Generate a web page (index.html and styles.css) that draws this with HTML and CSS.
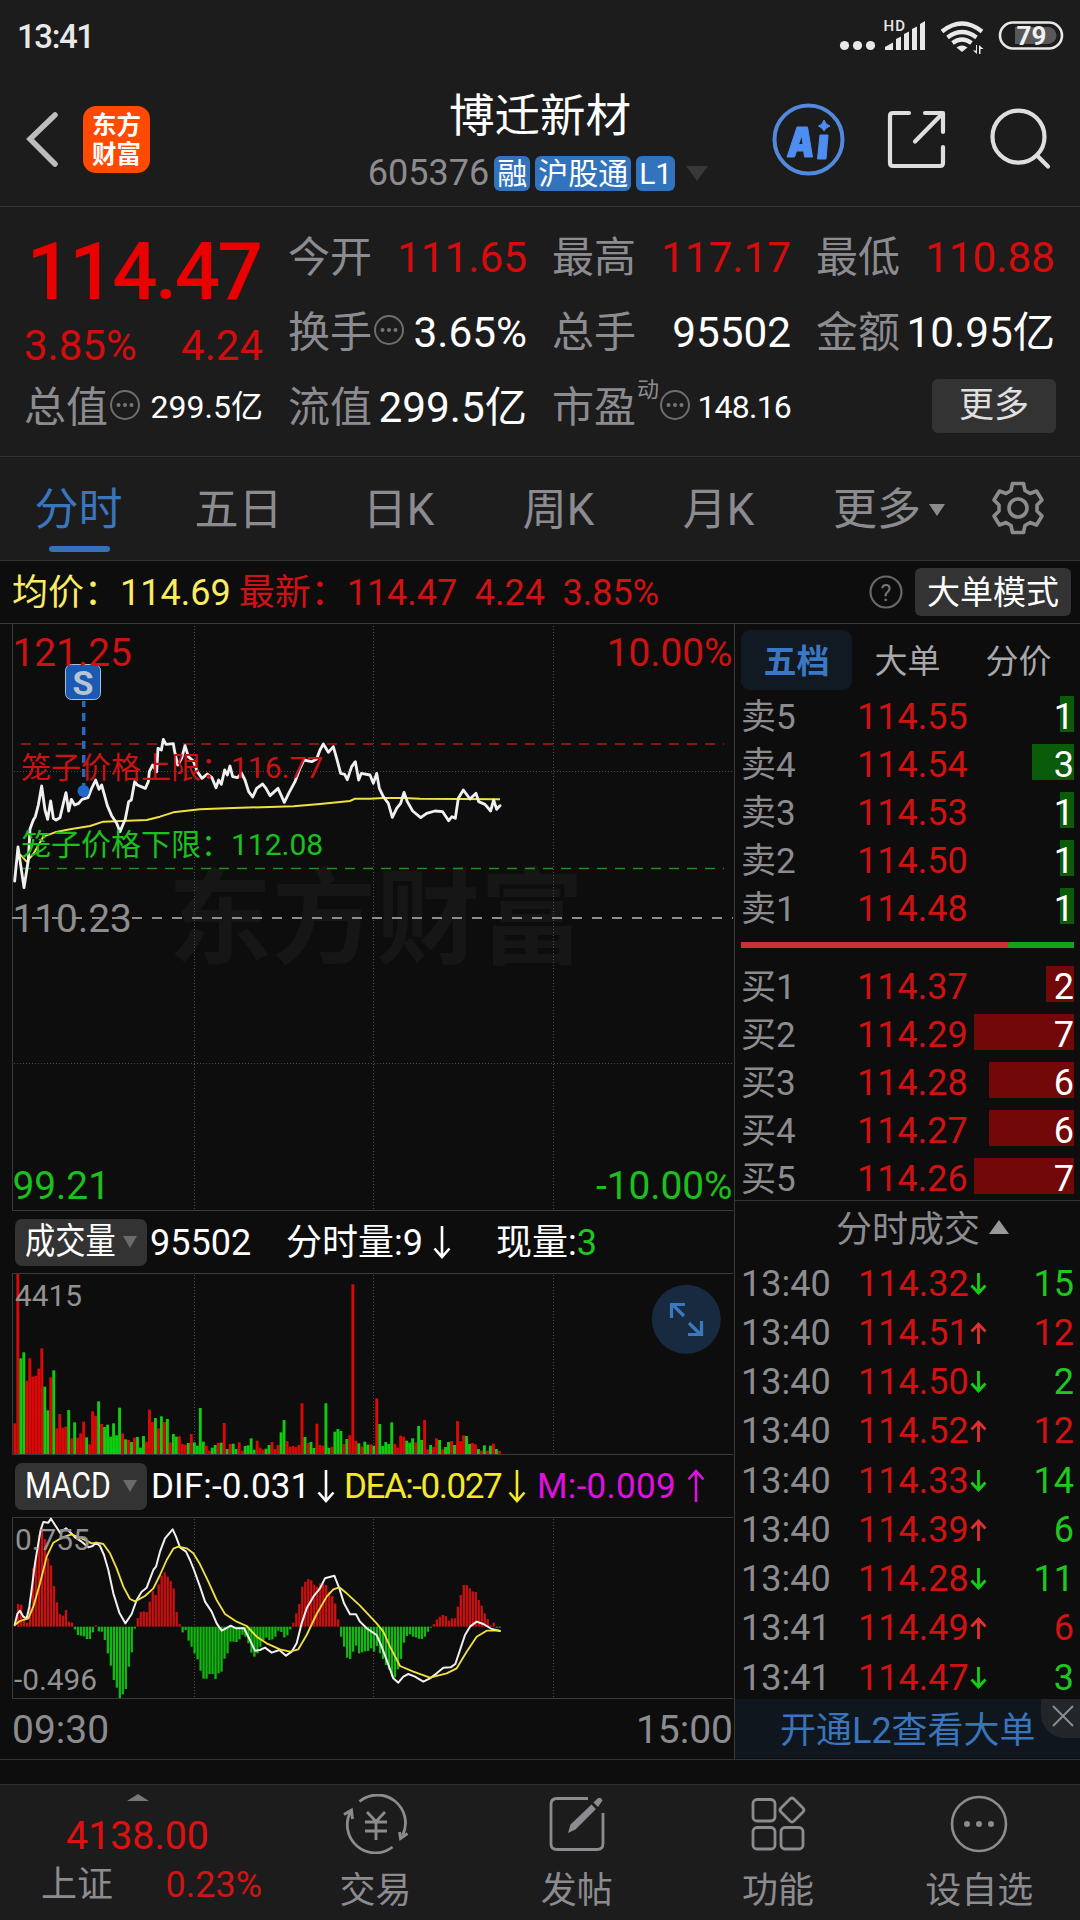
FILE: index.html
```html
<!DOCTYPE html>
<html lang="zh-CN">
<head>
<meta charset="utf-8">
<title>博迁新材 605376</title>
<link rel="stylesheet" href="styles.css">
</head>
<body>
<svg class="defs" width="0" height="0">
  <symbol id="more" viewBox="0 0 32 32"><circle cx="16" cy="16" r="14" fill="none" stroke="#6e6e70" stroke-width="2"/><g fill="#77777a"><circle cx="9.5" cy="16" r="2"/><circle cx="16" cy="16" r="2"/><circle cx="22.5" cy="16" r="2"/></g></symbol>
  <symbol id="down" viewBox="0 0 18 34"><path d="M9 1V31M1.500 23.500L9 32L16.500 23.500" fill="none" stroke="currentColor" stroke-width="2.600"/></symbol>
  <symbol id="up" viewBox="0 0 18 34"><path d="M9 33V3M1.500 10.500L9 2L16.500 10.500" fill="none" stroke="currentColor" stroke-width="2.600"/></symbol>
  <symbol id="tdown" viewBox="0 0 17 22"><path d="M8.500 0V20M1.500 12.500L8.500 20L15.500 12.500" fill="none" stroke="currentColor" stroke-width="2.800"/></symbol>
  <symbol id="tup" viewBox="0 0 17 22"><path d="M8.500 22V2M1.500 9.500L8.500 2L15.500 9.500" fill="none" stroke="currentColor" stroke-width="2.800"/></symbol>
</svg>

<div class="status">
  <span class="clock">13:41</span>
  <svg class="status-icons" width="200" height="40" viewBox="864 16 200 40">
    <g fill="#e8e8e8">
      <circle cx="844.500" cy="45.500" r="4.600"/><circle cx="857.500" cy="45.500" r="4.600"/><circle cx="870.500" cy="45.500" r="4.600"/>
      <path d="M885 50V47L893 42.500V50ZM896 50V39L901 36.500V50ZM904 50V34L909 31.500V50ZM912 50V29L917 26.500V50ZM920 50V24L925 21V50Z"/>
      <path d="M956.500 47.500Q962 43.500 967.500 47.500L962 52Z"/>
      <path d="M977 45V54L973 50.500H976V45ZM979 54V45L983.500 49H980.500V54Z"/>
    </g>
    <g fill="none" stroke="#e8e8e8" stroke-width="4.200">
      <path d="M942 31.500Q962 15.500 982 31.500M947.500 37.500Q962 26.500 976.500 37.500M952.500 43Q962 36 971.500 43"/>
      <rect x="1000" y="22.500" width="62" height="26" rx="13" stroke-width="2.600"/>
    </g>
    <path d="M1015 27H1048A8.500 8.500 0 0 1 1048 44H1015Z" fill="#58585a"/>
    <text class="hd" x="883.500" y="31">HD</text>
    <text class="batt" x="1031.500" y="44.500">79</text>
  </svg>
</div>

<header class="header">
  <svg class="back" width="40" height="60" viewBox="0 0 40 60"><path d="M31 6L6 30L31 55" fill="none" stroke="#bdbdbd" stroke-width="5.500" stroke-linecap="round"/></svg>
  <div class="logo"><span>东方</span><span>财富</span></div>
  <div class="title">
    <h1>博迁新材</h1>
    <div class="code"><span class="num">605376</span><b>融</b><b>沪股通</b><b>L1</b><i class="tri-down"></i></div>
  </div>
  <svg class="tools" width="290" height="80" viewBox="770 100 290 80" fill="none">
    <circle cx="808.500" cy="139.500" r="34" stroke="#5389dc" stroke-width="4"/>
    <path d="M787 157L797 127H807.500L812.500 157H804.500L803.700 151H796.500L794.500 157ZM798.500 144.500H803L801.800 135.500ZM820 135H828L826 159H817.500ZM824 120Q825.500 125 830 126Q825.500 127.500 824 131Q822.500 127.500 818.500 126Q822.500 125 824 120Z" fill="#4e8df2" stroke="#4e8df2" stroke-width="1" stroke-linejoin="round" fill-rule="evenodd"/>
    <g stroke="#dedede" stroke-width="4.200" stroke-linecap="round" stroke-linejoin="round">
      <path d="M909 113H893Q890 113 890 116V163Q890 166 893 166H940Q943 166 943 163V147M925 113H943V132M942 114L915 141.500"/>
      <circle cx="1018.500" cy="136.700" r="26"/><path d="M1037 155.500L1048 166.500"/>
    </g>
  </svg>
</header>

<section class="quote">
  <div class="last">
    <div class="price">114.47</div>
    <div class="chg"><span>3.85%</span><span>4.24</span></div>
    <div class="cell"><label>总值</label><svg class="dots"><use href="#more"/></svg><span class="val small">299.5亿</span></div>
  </div>
  <div class="cells">
    <div class="cell"><label>今开</label><span class="val red">111.65</span></div>
    <div class="cell"><label>最高</label><span class="val red">117.17</span></div>
    <div class="cell"><label>最低</label><span class="val red">110.88</span></div>
    <div class="cell"><label>换手</label><svg class="dots"><use href="#more"/></svg><span class="val">3.65%</span></div>
    <div class="cell"><label>总手</label><span class="val">95502</span></div>
    <div class="cell"><label>金额</label><span class="val">10.95亿</span></div>
    <div class="cell"><label>流值</label><span class="val">299.5亿</span></div>
    <div class="cell"><label>市盈</label><sup>动</sup><svg class="dots"><use href="#more"/></svg><span class="val small pe">148.16</span></div>
    <div class="cell"><span class="more-btn">更多</span></div>
  </div>
</section>

<nav class="periods">
  <span class="on">分时</span><span>五日</span><span>日K</span><span>周K</span><span>月K</span>
  <span class="more">更多<i class="tri-down"></i></span>
  <svg class="gear" width="52" height="54" viewBox="-26 -27 52 54" fill="none" stroke="#8c8c90" stroke-width="3.600" stroke-linejoin="round"><path d="M-5.500 -24.500H5.500L7 -17.500L12 -14.500L18.500 -17L24 -8L19 -3V3L24 8L18.500 17L12 14.500L7 17.500L5.500 24.500H-5.500L-7 17.500L-12 14.500L-18.500 17L-24 8L-19 3V-3L-24 -8L-18.500 -17L-12 -14.500L-7 -17.500Z"/><circle r="9"/></svg>
</nav>

<div class="strip">
  <span class="avg">均价：114.69</span><span class="now">最新：114.47</span><span class="now">4.24</span><span class="now">3.85%</span>
  <svg class="help" width="36" height="36" viewBox="0 0 36 36"><circle cx="18" cy="18" r="15.500" fill="none" stroke="#68686a" stroke-width="2.200"/><text x="18" y="26.500">?</text></svg>
  <span class="mode">大单模式</span>
</div>

<main class="board">
  <div class="charts">
    <svg class="chart" width="734" height="587" viewBox="0 624 734 587">
      <text class="mark" x="168" y="956">东方财富</text>
      <path class="frame" d="M12.500 624V1210.500H733"/>
      <path class="grid" d="M194.500 626V1210M373.500 626V1210M553.500 626V1210M14 771.500H733M14 1063.500H733"/>
      <path d="M12 918H733" stroke="#8e8e90" stroke-width="2" stroke-dasharray="10 10"/>
      <path d="M21 744H724" stroke="#861616" stroke-width="2" stroke-dasharray="10 8"/>
      <path d="M21 868.500H724" stroke="#1f8f1f" stroke-width="1.400" stroke-dasharray="10 8"/>
      <path d="M83.700 701V786" stroke="#2a68c0" stroke-width="3.500" stroke-dasharray="8 6" stroke-dashoffset="2"/>
      <g id="priceLines" transform="translate(0 555) scale(.33333)"></g>
      <circle cx="83.500" cy="791" r="6" fill="#1e68d0"/>
      <rect x="65.500" y="664.500" width="35" height="35" rx="6" fill="#1a5ab4" stroke="#a9bcd8"/>
      <text class="s" x="83" y="694.500">S</text>
      <g class="axis">
        <text class="r" x="12.500" y="666">121.25</text><text class="r end" x="732.500" y="666">10.00%</text>
        <text x="12.500" y="932">110.23</text>
        <text class="g" x="12.500" y="1198.500">99.21</text><text class="g end" x="732.500" y="1198.500">-10.00%</text>
      </g>
      <text class="cage r" x="21" y="778">笼子价格上限：116.77</text>
      <text class="cage g" x="21" y="854.500">笼子价格下限：112.08</text>
    </svg>
    <div class="ind">
      <span class="pill"><em>成交量</em><i class="tri-down"></i></span>
      <span class="v1">95502</span><span class="v2">分时量:9</span><svg class="arr"><use href="#down"/></svg><span class="v3">现量:<span class="gtx">3</span></span>
    </div>
    <svg class="chart" width="734" height="182" viewBox="0 1273 734 182">
      <path class="frame" d="M733 1273.500H12.500V1454.500H733"/>
      <path class="grid" d="M194.500 1275V1454M373.500 1275V1454M553.500 1275V1454"/>
      <g id="volBars"></g>
      <text class="scale" x="15" y="1306">4415</text>
      <circle cx="686.300" cy="1319.300" r="34.500" fill="#182a40"/>
      <path d="M684 1316L672 1304M671.500 1318V1304.500H685M689 1323L701 1335M688 1334.500H701.500V1321" fill="none" stroke="#3c78bd" stroke-width="3.200"/>
    </svg>
    <div class="ind macd">
      <span class="pill"><em>MACD</em><i class="tri-down"></i></span>
      <span class="m1">DIF:-0.031</span><svg class="arr"><use href="#down"/></svg>
      <span class="m2">DEA:-0.027</span><svg class="arr y"><use href="#down"/></svg>
      <span class="m3">M:-0.009</span><svg class="arr p"><use href="#up"/></svg>
    </div>
    <svg class="chart" width="734" height="182" viewBox="0 1517 734 182">
      <path class="frame" d="M733 1517.500H12.500V1698.500H733"/>
      <path class="grid" d="M194.500 1519V1698M373.500 1519V1698M553.500 1519V1698"/>
      <g id="macdBars"></g>
      <g id="macdLines" transform="translate(0 1460) scale(.33333)"></g>
      <text class="scale" x="15" y="1549.500">0.755</text>
      <text class="scale" x="14" y="1689.500">-0.496</text>
    </svg>
    <div class="times"><span>09:30</span><span>15:00</span></div>
  </div>

  <aside class="side">
    <div class="tabs"><span class="on">五档</span><span>大单</span><span>分价</span></div>
    <div class="book sell">
      <div><span>卖5</span><span>114.55</span><b style="--w:14px">1</b></div>
      <div><span>卖4</span><span>114.54</span><b style="--w:42px">3</b></div>
      <div><span>卖3</span><span>114.53</span><b style="--w:14px">1</b></div>
      <div><span>卖2</span><span>114.50</span><b style="--w:14px">1</b></div>
      <div><span>卖1</span><span>114.48</span><b style="--w:14px">1</b></div>
    </div>
    <div class="ratio"></div>
    <div class="book buy">
      <div><span>买1</span><span>114.37</span><b style="--w:28px">2</b></div>
      <div><span>买2</span><span>114.29</span><b style="--w:100px">7</b></div>
      <div><span>买3</span><span>114.28</span><b style="--w:85px">6</b></div>
      <div><span>买4</span><span>114.27</span><b style="--w:85px">6</b></div>
      <div><span>买5</span><span>114.26</span><b style="--w:100px">7</b></div>
    </div>
    <div class="ticks-head">分时成交<i class="tri-up"></i></div>
    <div class="ticks">
      <div><span>13:40</span><span>114.32</span><svg class="dn"><use href="#tdown"/></svg><b class="gtx">15</b></div>
      <div><span>13:40</span><span>114.51</span><svg class="rise"><use href="#tup"/></svg><b class="rtx">12</b></div>
      <div><span>13:40</span><span>114.50</span><svg class="dn"><use href="#tdown"/></svg><b class="gtx">2</b></div>
      <div><span>13:40</span><span>114.52</span><svg class="rise"><use href="#tup"/></svg><b class="rtx">12</b></div>
      <div><span>13:40</span><span>114.33</span><svg class="dn"><use href="#tdown"/></svg><b class="gtx">14</b></div>
      <div><span>13:40</span><span>114.39</span><svg class="rise"><use href="#tup"/></svg><b class="gtx">6</b></div>
      <div><span>13:40</span><span>114.28</span><svg class="dn"><use href="#tdown"/></svg><b class="gtx">11</b></div>
      <div><span>13:41</span><span>114.49</span><svg class="rise"><use href="#tup"/></svg><b class="rtx">6</b></div>
      <div><span>13:41</span><span>114.47</span><svg class="dn"><use href="#tdown"/></svg><b class="gtx">3</b></div>
    </div>
    <div class="promo"><span>开通L2查看大单</span>
      <i class="close"><svg width="24" height="24" viewBox="0 0 24 24"><path d="M2 2L22 22M22 2L2 22" stroke="#8c8c90" stroke-width="2"/></svg></i>
    </div>
  </aside>
</main>

<footer class="bottom">
  <div class="index"><i class="tri-up"></i><div class="pt">4138.00</div><div class="row"><span>上证</span><span class="rtx">0.23%</span></div></div>
  <div class="item"><svg width="68" height="60" viewBox="-34 -30 68 60" fill="none" stroke="#8c8c90" stroke-width="2.800"><path d="M-16.500 -22.500A28 28 0 0 1 26.500 11.500M16.500 23A28 28 0 0 1 -25 -13M-32 -9.500L-24.500 -14L-23.500 -5M31.500 9.500L24.500 14.500L23.500 8M-9 -12L0 -2.500L9 -12M0 -2.500V16M-11 -2H11M-11 7H11"/></svg><span>交易</span></div>
  <div class="item"><svg width="68" height="60" viewBox="-34 -30 68 60" fill="none" stroke="#8c8c90" stroke-width="2.800"><path d="M11 -25.500H-20Q-26 -25.500 -26 -19.500V20Q-26 25.500 -20 25.500H20Q26 25.500 26 19.500V-11"/><path d="M-9 9L-6.500 0.500L14.500 -19.500L19 -15L-1.500 5.500ZM16.500 -21.500L20.500 -25.500Q24 -27.500 25.500 -23.500L21 -17Z" fill="#8c8c90" stroke="none"/></svg><span>发帖</span></div>
  <div class="item"><svg width="68" height="60" viewBox="-34 -30 68 60" fill="none" stroke="#8c8c90" stroke-width="2.800"><rect x="-25" y="-24.500" width="22" height="21.500" rx="4"/><rect x="-25" y="3.500" width="22" height="21.500" rx="4"/><rect x="3" y="3.500" width="22" height="21.500" rx="4"/><path d="M12 -25Q14 -27 16 -25L25 -16Q27 -14 25 -12L16 -3Q14 -1 12 -3L3 -12Q1 -14 3 -16Z"/></svg><span>功能</span></div>
  <div class="item"><svg width="68" height="60" viewBox="-34 -30 68 60" fill="none" stroke="#8c8c90" stroke-width="2.600"><circle r="27"/><g fill="#8c8c90" stroke="none"><circle cx="-12" r="3"/><circle r="3"/><circle cx="12" r="3"/></g></svg><span>设自选</span></div>
</footer>
<script src="charts.js"></script>
</body>
</html>
```
FILE: styles.css
```css
* { box-sizing: border-box; }
body { margin: 0; width: 1080px; height: 1920px; overflow: hidden; background: #0d0d0d; color: #fff; font-family: Roboto, "Noto Sans CJK SC", sans-serif; font-size: 36px; line-height: 1; }
i, em { font-style: normal; }
span, b, label, h1 { white-space: nowrap; }
.defs { position: absolute; }
.tri-down { display: inline-block; border: solid transparent; border-width: 0; }
.rtx { color: #d01414; }
.gtx { color: #1ec81e; }

.status { display: flex; justify-content: space-between; height: 72px; padding: 16px 16px 0 17px; background: #1c1c1c; }
.clock { font-size: 33px; font-weight: 500; line-height: 42px; letter-spacing: -1.4px; color: #e8e8e8; }
.status-icons { overflow: visible; }
.hd { font-size: 15px; font-weight: 500; fill: #e8e8e8; letter-spacing: 1px; }
.batt { font-size: 26px; font-weight: 700; fill: #f0f0f0; text-anchor: middle; }

.header { display: flex; height: 135px; padding-left: 24px; background: #1c1c1c; border-bottom: 1px solid #333; }
.back { margin-top: 37px; }
.logo { display: flex; flex-direction: column; align-items: center; justify-content: center; gap: 4px; width: 67px; height: 67px; margin: 34px 0 0 19px; border-radius: 13px; background: #ff4a00; font-size: 24.5px; font-weight: 700; line-height: 25px; }
.title { width: 390px; margin-left: 195px; padding-top: 22px; text-align: center; }
h1 { margin: 0; font-size: 45.5px; font-weight: 400; line-height: 46px; }
.code { display: flex; align-items: center; justify-content: center; margin: 15px 0 0 -4px; height: 36px; gap: 5px; color: #8c8c90; line-height: 38px; }
.code b { height: 35px; padding: 0 3px; border-radius: 6px; background: #3273be; color: #fff; font-size: 30px; font-weight: 400; line-height: 35px; }
.code .tri-down { margin-left: 6px; border-width: 15px 11px 0; border-top-color: #383838; }
.tools { margin: 28px 0 0 35px; }

.quote { display: grid; grid-template-columns: 240px 768px; gap: 24px; height: 250px; padding: 13px 24px 0; background: #1c1c1c; border-bottom: 1px solid #333; }
.price { height: 90px; margin-left: -1px; font-size: 80px; font-weight: 500; line-height: 104px; color: #eb0000; letter-spacing: -2.6px; text-align: center; }
.chg { display: flex; justify-content: space-between; height: 60px; font-size: 42px; line-height: 72px; color: #d40c0c; padding-right: 1px; }
.cells { display: grid; grid-template-columns: repeat(3, 240px); grid-auto-rows: 75px; gap: 0 24px; }
.cell { display: flex; align-items: center; height: 75px; line-height: 1.05; }
.cell label { font-size: 42px; padding-top: 1px; }
.cell label { color: #8c8c90; }
.cell sup { align-self: flex-start; margin: 9px 0 0 1px; width: 22px; font-size: 22px; line-height: 22px; color: #8c8c90; white-space: nowrap; }
.cell .val { margin-left: auto; padding: 2px 1px 0 0; font-size: 42.3px; }
.cell .small { font-size: 32px; padding-top: 1px; }
.cell .pe { letter-spacing: -.8px; }
.cell .red { color: #d40c0c; }
.dots { flex: none; width: 32px; height: 32px; margin: -5px 0 0 1px; }
.cell sup + .dots { margin-left: 0; }
.more-btn { width: 124px; height: 54px; margin: -3px 0 0 auto; border-radius: 6px; background: #333; color: #e0e0e0; font-size: 35px; line-height: 53px; text-align: center; }

.periods { display: flex; align-items: flex-start; height: 104px; background: #1c1c1c; border-bottom: 1px solid #333; color: #8c8c90; font-size: 44px; line-height: 106px; }
.periods span { position: relative; width: 160px; padding-right: 3px; text-align: center; }
.periods .on { color: #3a76bd; }
.periods .on::after { content: ""; position: absolute; left: 49px; top: 89px; width: 61px; height: 6px; border-radius: 3px; background: #3273be; }
.periods .more { display: flex; align-items: center; justify-content: flex-end; width: 146px; padding-right: 1px; gap: 8px; }
.periods .tri-down { border-width: 12px 8px 0; border-top-color: #8c8c90; }
.gear { margin: 24px 0 0 46px; }

.strip { display: flex; align-items: center; height: 63px; padding: 0 9px 0 12px; border-bottom: 1px solid #3a3a3a; line-height: 38px; }
.strip .avg { color: #fbec62; margin-right: 8px; padding-top: 1px; }
.strip .now { color: #d01212; margin-right: 17.5px; padding-top: 1px; }
.help { margin-left: auto; }
.help text { fill: #77777a; font-size: 23px; text-anchor: middle; }
.mode { width: 156px; height: 48px; margin-left: 11px; border-radius: 6px; background: #333; font-size: 33px; line-height: 49px; text-align: center; }

.board { display: grid; grid-template-columns: 734px 346px; height: 1136px; border-bottom: 1px solid #333; }
.chart { display: block; }
.frame { fill: none; stroke: #3a3a3a; }
.grid { fill: none; stroke: #4a4a4a; stroke-dasharray: 1 2; }
.mark { font-size: 104px; font-weight: 700; fill: #161616; }
.axis { font-size: 38.8px; fill: #8e8e90; }
.end { text-anchor: end; }
.r { fill: #cc1212; }
.g { fill: #1cc01c; }
.cage { font-size: 30px; }
.s { font-size: 34px; font-weight: 700; fill: #b8c4d4; text-anchor: middle; }
.scale { font-size: 29.8px; fill: #929292; }
.line { fill: none; stroke: #f0f0f0; stroke-linejoin: round; stroke-linecap: round; }
.avg-line { fill: none; stroke: #f0e040; stroke-linejoin: round; }

.ind { display: flex; align-items: center; height: 62px; padding-left: 15px; line-height: 38px; }
.ind > span { padding-top: 1px; }
.ind .pill { display: flex; align-items: center; width: 132px; height: 47px; padding: 0 0 0 10px; border-radius: 7px; background: #333; }
.pill em { width: 98px; transform: scaleX(.84); transform-origin: 0 50%; }
.pill .tri-down { border-width: 12px 7.5px 0; border-top-color: #6a6a6a; }
.arr { flex: none; width: 18px; height: 34px; color: #fff; }
.v1 { margin-left: 3px; width: 136px; }
.v2 { width: 138px; margin-right: 9px; }
.v3 { margin-left: 45px; }
.macd { font-size: 35px; }
.macd .pill { font-size: 36px; }
.m1 { width: 166px; margin-left: 4px; letter-spacing: .15px; }
.m2 { width: 164px; margin-left: 9px; color: #f5e82a; letter-spacing: -1.45px; }
.m3 { width: 150px; margin-left: 11px; color: #e010e0; letter-spacing: .3px; }
.y { color: #f5e82a; }
.p { color: #e010e0; }
.times { display: flex; justify-content: space-between; height: 60px; padding: 0 1px 0 12px; font-size: 39px; line-height: 63px; color: #8c8c90; }

.side { border-left: 1px solid #3a3a3a; padding: 6px 0 0 6px; }
.tabs { display: grid; grid-template-columns: repeat(3, 111px); height: 66px; font-size: 33px; line-height: 63px; text-align: center; color: #a8a8aa; }
.tabs .on { height: 60px; border-radius: 9px; background: #111922; color: #3a78c4; font-weight: 700; }
.book div { display: grid; grid-template-columns: 116px 117px 100px; height: 48px; line-height: 43px; }
.book span:first-child { color: #8c8c90; font-size: 35px; }
.book span + span { color: #d01212; }
.book b { height: 36px; width: 100px; font-weight: 400; text-align: right; background: linear-gradient(to left, var(--c) var(--w), transparent var(--w)); }
.sell { --c: #0a5c0a; }
.buy { --c: #720808; }
.ratio { width: 333px; height: 6px; margin: 6px 0 18px; background: linear-gradient(115deg, #c83232 80%, #18a018 80%); }
.ticks-head { display: flex; align-items: center; gap: 9px; height: 59px; margin: -6px 0 0 -6px; padding-left: 101px; border-top: 1px solid #333; color: #8c8c90; line-height: 38px; }
.tri-up { display: inline-block; border: solid transparent; border-width: 0 10.5px 14px; border-bottom-color: #99999b; }
.ticks-head .tri-up { margin-top: -6px; }
.ticks div { display: flex; align-items: center; height: 49.25px; }
.ticks span { width: 117px; color: #8c8c90; }
.ticks span + span { width: 112px; color: #d01212; }
.ticks svg { flex: none; width: 17px; height: 22px; }
.ticks b { width: 87px; text-align: right; font-weight: 400; }
.dn { color: #14d014; }
.rise { color: #e03030; }
.promo { display: flex; position: relative; height: 59px; margin: -3px 0 0 -6px; padding-left: 45px; background: #0f161e; color: #3a74ba; line-height: 64px; }
.close { position: absolute; right: 0; top: 0; width: 39px; height: 39px; padding: 5px 0 0 10px; border-bottom-left-radius: 24px; background: #22262a; line-height: 0; }

.bottom { display: grid; grid-template-columns: 275px repeat(4, 201.25px); height: 136px; margin-top: 24px; background: #1c1c1c; border-top: 1px solid #2e2e2e; color: #8c8c90; }
.index { display: flex; flex-direction: column; align-items: center; padding-top: 9px; }
.index .tri-up { border-width: 0 11px 7px; border-bottom-color: #77777a; }
.index .pt { margin-top: 15px; font-size: 39.3px; line-height: 40px; color: #e01010; }
.index .row { display: flex; justify-content: space-between; width: 100%; margin-top: 9px; padding: 0 13px 0 41px; line-height: 40px; }
.item { display: flex; flex-direction: column; align-items: center; padding-top: 9px; }
.item span { margin-top: 17px; line-height: 40px; }
```
FILE: charts.js
```js
var NS = 'http://www.w3.org/2000/svg';

function draw(parent, cls, points, width) {
  var el = document.createElementNS(NS, 'polyline');
  el.setAttribute('class', cls);
  el.setAttribute('points', points);
  el.setAttribute('stroke-width', width);
  document.getElementById(parent).appendChild(el);
}

function bar(parent, x, y, w, h, fill) {
  var el = document.createElementNS(NS, 'rect');
  el.setAttribute('x', x.toFixed(2));
  el.setAttribute('y', y.toFixed(2));
  el.setAttribute('width', w);
  el.setAttribute('height', h.toFixed(2));
  el.setAttribute('fill', fill);
  document.getElementById(parent).appendChild(el);
}

// Minute prices and the running average, three units per pixel.
draw('priceLines', 'avg-line', '60,898 80,920 100,897 130,845 165,832 210,823 270,813 310,800 440,795 480,785 520,772 600,763 700,759 880,754 960,747 1050,738 1065,731 1110,731 1150,729 1210,729 1260,731 1500,733', 6);
draw('priceLines', 'line', '44,978 54,876 72,998 85,915 90,822 100,795 106,785 115,750 125,693 135,765 143,793 152,738 160,790 168,795 180,788 190,745 198,713 206,768 214,733 224,750 236,745 246,733 264,728 275,700 287,675 297,703 305,690 312,715 322,752 335,782 350,805 360,830 376,792 386,740 394,735 404,680 412,690 436,700 445,680 448,650 458,630 470,650 474,580 484,585 490,553 498,568 520,566 524,590 533,630 545,610 555,572 565,605 580,618 592,650 606,670 622,657 636,668 648,698 656,675 664,688 674,645 682,660 690,633 698,665 712,668 725,655 735,675 746,710 758,726 770,700 788,687 798,700 810,722 834,700 853,742 866,715 885,680 900,640 912,615 935,620 950,612 960,585 970,567 985,592 1000,575 1010,610 1022,655 1034,658 1042,674 1055,635 1066,620 1076,675 1084,655 1110,660 1120,685 1130,655 1138,700 1150,725 1165,745 1177,787 1190,760 1202,745 1212,712 1222,740 1238,768 1262,788 1280,775 1305,768 1328,770 1346,797 1356,785 1366,790 1375,730 1390,705 1410,732 1428,715 1436,740 1455,748 1472,768 1481,735 1490,763 1500,752', 8.5);

// Volume per minute: direction and bar top.
var vol = 'R730 R282 G535 G517 R602 R535 R590 R587 R566 R505 G620 G691 R592 G571 R745 R702 R743 R740 G690 R775 G727 R773 R760 R725 G772 R793 R694 R708 G664 R732 G741 G734 G770 G730 G766 G683 R760 G778 R780 G786 R773 G771 G803 G768 R785 R689 R726 G714 R745 G709 R726 G717 R787 G762 G770 R769 R792 R794 G789 R762 G787 G797 G684 G785 R797 R812 G803 G795 R788 G788 R729 G807 R792 G791 G807 R787 R812 G798 G796 G775 G809 R782 R803 R809 G806 G795 R786 R807 R795 G757 G720 R783 R800 R798 R801 R795 R670 G771 R789 G786 G804 R731 R795 R797 G670 G804 R800 G755 G747 G753 R792 G777 R766 R313 R782 G790 R800 G785 G794 R793 G797 R655 G732 G798 G786 G792 G727 R792 R803 R767 R770 G782 G788 G775 R787 G738 G780 R720 R808 G795 R801 R775 G780 R808 G801 G786 R783 G795 R723 R783 R766 G768 G792 R789 R793 G807 R812 G796 R812 G797 R791 G807 R813'.split(' ');
vol.forEach(function (v, i) {
  var h = (822 - Number(v.slice(1))) / 3;
  bar('volBars', 13.4 + i * 2.991, 1454 - h, 2.9, h, v[0] === 'R' ? '#dc0808' : '#10cc10');
});

// MACD histogram around the zero level at 500.
var macd = [498, 432, 434, 470, 488, 440, 325, 285, 225, 205, 237, 295, 316, 378, 427, 462, 467, 450, 485, 488, 508, 525, 527, 529, 537, 537, 517, 496, 514, 515, 540, 580, 617, 660, 683, 714, 703, 687, 620, 577, 506, 474, 456, 454, 456, 425, 393, 405, 373, 347, 337, 350, 363, 385, 456, 492, 517, 510, 542, 560, 580, 598, 632, 656, 656, 642, 642, 657, 640, 635, 596, 580, 545, 545, 546, 538, 524, 530, 550, 578, 590, 580, 560, 540, 533, 540, 538, 530, 512, 516, 532, 526, 508, 488, 460, 432, 380, 365, 357, 361, 374, 380, 370, 372, 375, 395, 408, 430, 478, 530, 560, 593, 597, 575, 557, 580, 577, 574, 573, 565, 575, 558, 580, 597, 615, 628, 650, 652, 628, 597, 548, 528, 523, 530, 532, 536, 537, 530, 515, 503, 492, 478, 470, 465, 468, 482, 475, 475, 440, 405, 375, 375, 385, 394, 396, 420, 437, 460, 477, 496, 488, 503, 503];
macd.forEach(function (v, i) {
  var x = 14 + i * 2.991, h = Math.abs(v - 500) / 3;
  bar('macdBars', x, v < 500 ? 1626.7 - h : 1626.7, 2.3, h, v < 500 ? '#cc0f0f' : '#10b810');
});

draw('macdLines', 'line', '44,495 52,462 60,452 70,470 80,475 88,440 96,380 105,310 115,250 122,210 130,186 145,188 153,176 165,195 180,218 198,205 212,218 225,232 245,245 265,262 278,258 288,248 300,258 312,285 325,330 340,400 358,458 376,490 395,462 410,420 425,395 440,383 460,330 468,320 480,275 495,235 518,208 528,230 540,262 558,275 570,300 582,330 600,380 615,425 635,455 650,490 665,512 678,505 692,497 708,505 732,505 745,530 765,572 780,570 795,563 815,578 838,570 858,587 875,575 890,550 905,490 920,445 940,410 960,385 975,355 1003,347 1018,385 1032,430 1050,463 1068,463 1080,485 1100,505 1130,525 1145,560 1160,600 1180,655 1195,668 1210,650 1225,642 1245,650 1270,665 1290,655 1310,640 1330,623 1352,622 1366,612 1380,570 1395,525 1410,500 1430,485 1450,492 1475,507 1500,513', 6);
draw('macdLines', 'avg-line', '44,495 60,483 85,475 100,440 120,370 140,290 160,248 185,233 215,223 245,235 275,250 290,248 310,252 330,280 350,325 370,380 390,417 405,424 435,408 460,385 480,345 500,300 520,266 535,260 560,265 580,280 600,313 625,365 650,420 675,462 710,485 740,498 770,530 800,550 840,568 870,575 895,568 920,525 950,462 980,410 1000,388 1018,382 1040,400 1080,437 1130,490 1150,515 1170,560 1200,618 1240,635 1290,653 1340,640 1370,625 1400,575 1430,530 1460,512 1500,512', 5.5);
```
